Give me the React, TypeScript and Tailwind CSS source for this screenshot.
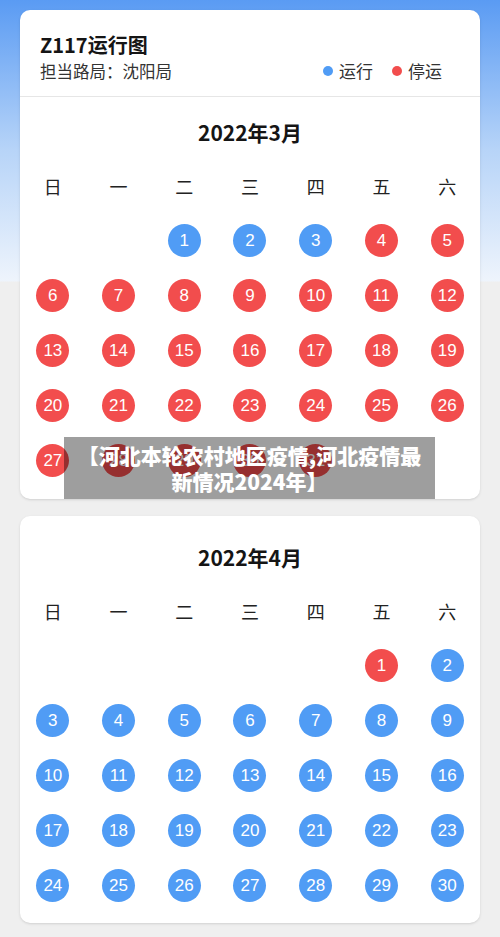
import React from "react";

const BLUE = "bg-[#509cf5]";
const RED = "bg-[#f24d4d]";

const weekdays = ["日", "一", "二", "三", "四", "五", "六"];

type Day = { n: number; stop: boolean } | null;

const buildMonth = (offset: number, total: number, isStop: (d: number) => boolean): Day[] => {
  const cells: Day[] = [];
  for (let i = 0; i < offset; i++) cells.push(null);
  for (let d = 1; d <= total; d++) cells.push({ n: d, stop: isStop(d) });
  return cells;
};

const months = [
  { title: "2022年3月", days: buildMonth(2, 31, (d) => d >= 4) },
  { title: "2022年4月", days: buildMonth(5, 30, (d) => d === 1) },
];

const MonthBody = ({ title, days }: { title: string; days: Day[] }) => (
  <div>
    <div className="h-[55px] flex items-center justify-center text-[21px] font-bold text-[#151515]">
      {title}
    </div>
    <div className="grid grid-cols-7 h-[53px] items-center">
      {weekdays.map((w) => (
        <div key={w} className="text-center text-[18px] text-[#222]">
          {w}
        </div>
      ))}
    </div>
    <div className="grid grid-cols-7 auto-rows-[55px] items-center">
      {days.map((day, i) => (
        <div key={i} className="flex justify-center">
          {day && (
            <div
              className={`w-[33px] h-[33px] rounded-full flex items-center justify-center text-white text-[17px] font-['Liberation_Sans',sans-serif] ${
                day.stop ? RED : BLUE
              }`}
            >
              {day.n}
            </div>
          )}
        </div>
      ))}
    </div>
  </div>
);

export default function App() {
  return (
    <div className="relative min-h-[937px] w-full px-5 pt-[10px] pb-4 bg-[linear-gradient(to_bottom,#5a9bf3_0px,#b7d4f8_150px,#eef4fc_281px,#efefef_282px,#efefef_100%)] font-['Noto_Sans_CJK_SC',sans-serif]">
      <div className="bg-white rounded-[10px] shadow-sm overflow-hidden">
        <div className="h-[87px] pl-5 pr-[38px] pt-[21px] border-b border-[#e6e6e6]">
          <div className="text-[20px] font-bold text-[#151515] leading-[28px]">Z117运行图</div>
          <div className="flex items-center justify-between leading-[24px]">
            <span className="text-[16.5px] text-[#333]">担当路局：沈阳局</span>
            <div className="flex items-center gap-[19px] text-[17px] text-[#333]">
              <span className="flex items-center gap-[6px]">
                <span className={`w-[10px] h-[10px] rounded-full ${BLUE}`} />
                运行
              </span>
              <span className="flex items-center gap-[6px]">
                <span className={`w-[10px] h-[10px] rounded-full ${RED}`} />
                停运
              </span>
            </div>
          </div>
        </div>
        <div className="pt-2 pb-[11px]">
          <MonthBody {...months[0]} />
        </div>
      </div>

      <div className="mt-[17px] bg-white rounded-[10px] shadow-sm pt-[14px] pb-[10px]">
        <MonthBody {...months[1]} />
      </div>

      <div className="absolute left-[64px] top-[437px] w-[371px] h-[62px] bg-[rgba(0,0,0,0.38)] px-[12px] flex items-center justify-center text-center text-white font-black text-[21px] leading-[26px]">
        【河北本轮农村地区疫情,河北疫情最新情况2024年】
      </div>
    </div>
  );
}
